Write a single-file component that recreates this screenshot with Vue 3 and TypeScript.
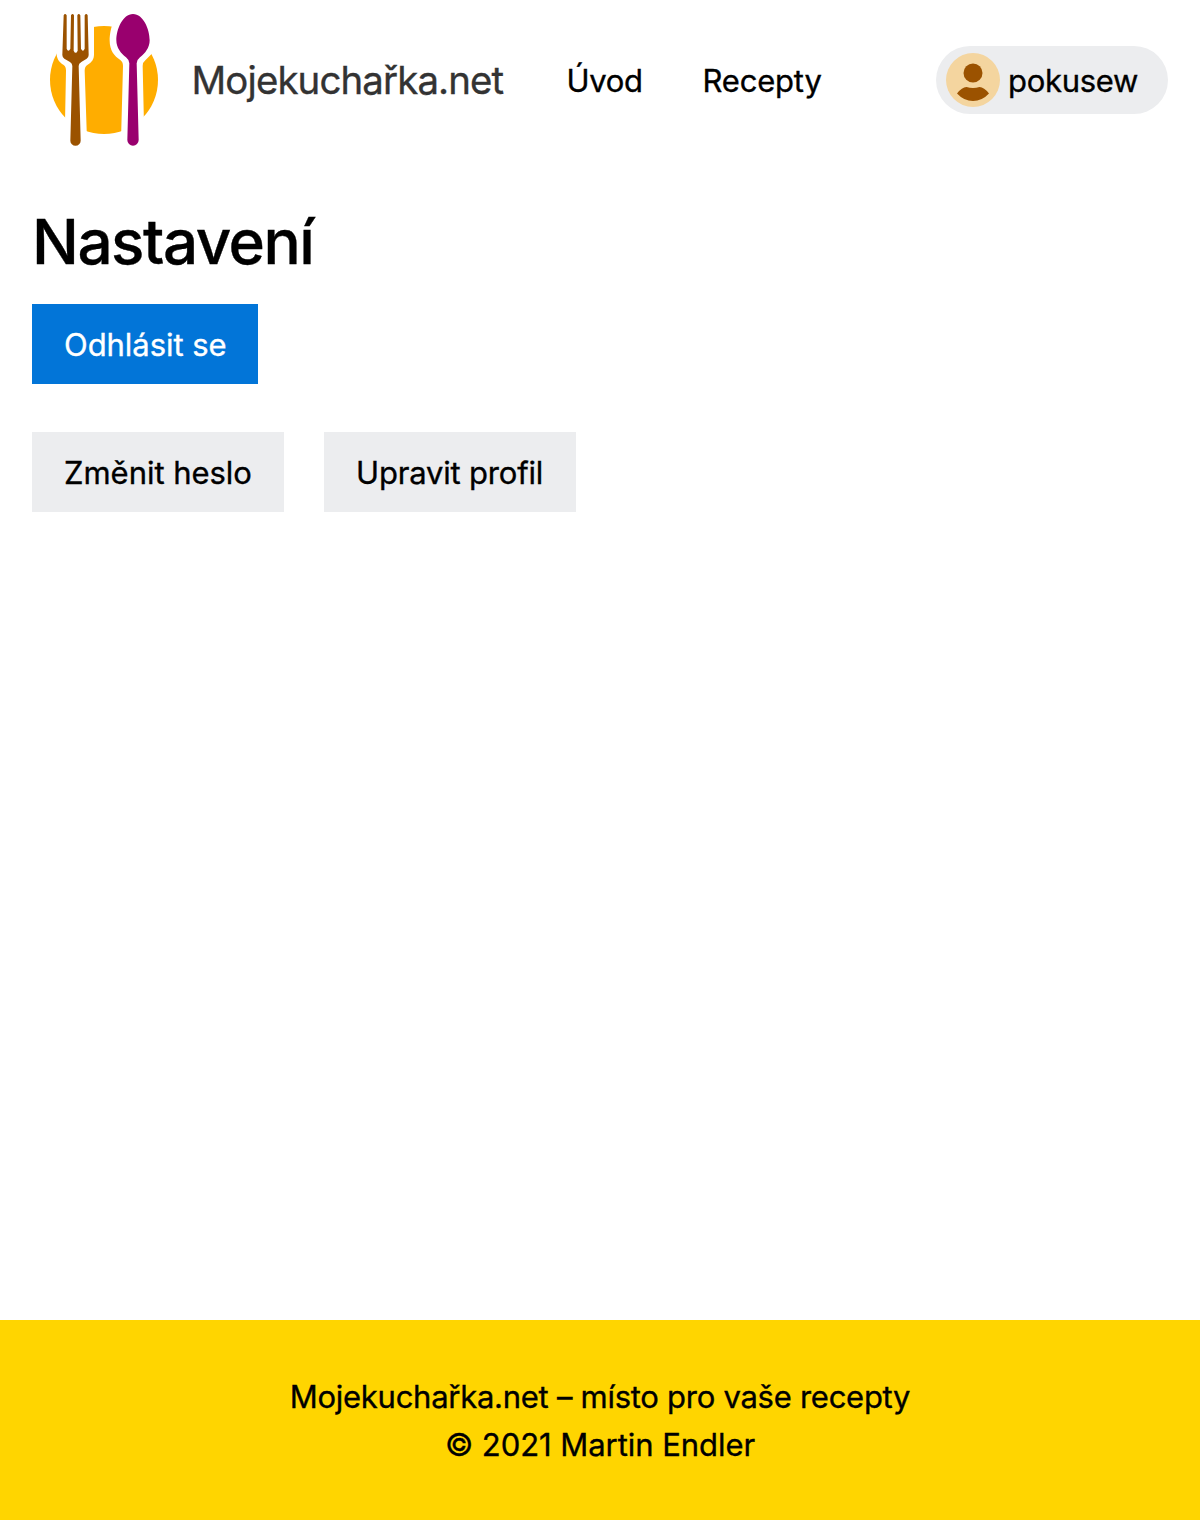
<script setup lang="ts">
interface NavItem {
  label: string
  className: string
}

const navItems: NavItem[] = [
  { label: 'Úvod', className: 'home' },
  { label: 'Recepty', className: 'recipes' },
]
</script>

<template>
  <div class="page">
    <header class="header">
      <a class="brand">
        <svg class="logo" viewBox="0 0 390 465" aria-hidden="true">
          <circle cx="192" cy="240" r="162" fill="#ffad00" />
          <path fill="#fff" d="M50 30V165C52 180 60 188 70 194Q78 199 78 212L74 420H141L134 212Q134 199 143 194C156 187 162 178 162 163V30Z" />
          <path fill="#fff" d="M222 60C212 84 209 105 209 122C209 151 224 169 240 179Q249 185 249 198L243 420H313L308 198Q308 187 316 181L334 163Q349 145 349 120L330 50Z" />
          <path fill="#9b5200" d="M71 46Q75 38 80 46L80 146Q85 158 91 146L93 46Q98 38 102 46L101 152Q107 165 113 152L112 46Q116 38 121 46L123 146Q129 158 134 146L134 46Q139 38 143 46L146 165Q146 172 140 176L124 186Q116 190 116 198L122 422A15.500 15.500 0 0 1 91 422L97 198Q97 190 90 186L73 176Q67 172 67 165Z" />
          <path fill="#99006e" d="M279 42C310 42 329 88 329 121C329 143 315 161 300 172Q290 180 290 190L296 420A17 17 0 0 1 262 420L268 190Q268 180 258 172C243 161 229 143 229 121C229 88 248 42 279 42Z" />
        </svg>
        <span class="brand-name">Mojekuchařka.net</span>
      </a>
      <nav class="nav">
        <a v-for="item in navItems" :key="item.label" class="nav-link" :class="item.className">{{ item.label }}</a>
      </nav>
      <a class="user">
        <svg class="avatar" viewBox="0 0 54 54" aria-hidden="true">
          <circle cx="27" cy="27" r="27" fill="#f4d59f" />
          <circle cx="27" cy="20" r="9.500" fill="#9b5200" />
          <path fill="#9b5200" d="M11 40.500Q16 34 20.500 34Q27 36 33.500 34Q38 34 43 40.500Q36 48 27 48Q18 48 11 40.500Z" />
        </svg>
        <span class="user-name">pokusew</span>
      </a>
    </header>
    <main class="content">
      <h1>Nastavení</h1>
      <button class="button primary" type="button">Odhlásit se</button>
      <div class="actions">
        <button class="button password" type="button">Změnit heslo</button>
        <button class="button profile" type="button">Upravit profil</button>
      </div>
    </main>
    <footer class="footer">
      <div class="tagline">Mojekuchařka.net – místo pro vaše recepty</div>
      <div class="copyright">© 2021 Martin Endler</div>
    </footer>
  </div>
</template>

<style>
body {
  margin: 0;
  background: #fff;
}
</style>

<style scoped>
.page {
  display: flex;
  flex-direction: column;
  min-height: 1520px;
  font-family: Inter, "Liberation Sans", sans-serif;
  font-size: 31px;
  line-height: 48px;
  color: #000;
  -webkit-text-stroke: 0.35px currentColor;
}
.header {
  display: flex;
  align-items: center;
  box-sizing: border-box;
  height: 160px;
  padding: 0 32px 0 40px;
}
.brand {
  display: flex;
  align-items: center;
  height: 160px;
  color: #333;
}
.logo {
  width: 130px;
  height: 155px;
  align-self: flex-start;
}
.brand-name {
  width: 335px;
  margin-left: 21.5px;
  font-size: 38.4px;
  letter-spacing: -0.87px;
}
.nav {
  display: flex;
  padding-top: 2px;
  margin-left: 40px;
}
.home {
  width: 136px;
  letter-spacing: -0.3px;
}
.recipes {
  letter-spacing: -0.2px;
}
.user {
  display: flex;
  align-items: center;
  box-sizing: border-box;
  width: 232px;
  height: 68px;
  margin-left: auto;
  padding-left: 10px;
  border-radius: 34px;
  background: #ecedef;
}
.avatar {
  flex: none;
  width: 54px;
  height: 54px;
}
.user-name {
  margin-left: 8px;
  padding-top: 2px;
  letter-spacing: -0.3px;
}
.content {
  flex: 1;
  padding: 42px 32px 0;
}
h1 {
  margin: 0 0 22px;
  font-size: 62px;
  font-weight: 500;
  line-height: 80px;
  letter-spacing: -1.5px;
}
.button {
  display: block;
  height: 80px;
  padding: 2px 0 0 32px;
  border: 0;
  font: inherit;
  text-align: left;
  white-space: nowrap;
  color: #000;
  background: #ecedef;
}
.primary {
  width: 226px;
  color: #fff;
  background: #0275d8;
  letter-spacing: -0.05px;
}
.actions {
  display: flex;
  gap: 40px;
  margin-top: 48px;
}
.actions .button {
  width: 252px;
}
.password {
  letter-spacing: -0.03px;
}
.profile {
  letter-spacing: -0.18px;
}
.footer {
  box-sizing: border-box;
  height: 200px;
  padding-top: 53px;
  text-align: center;
  background: #ffd500;
}
.tagline {
  letter-spacing: -0.27px;
}
.copyright {
  letter-spacing: -0.05px;
}
</style>
